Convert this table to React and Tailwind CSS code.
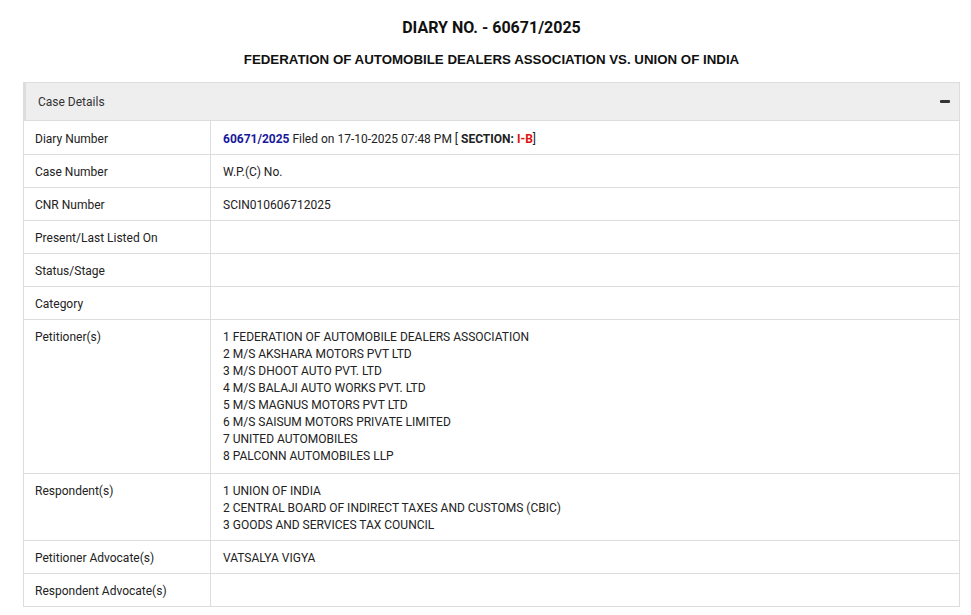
import React from 'react'

const petitioners = [
  '1 FEDERATION OF AUTOMOBILE DEALERS ASSOCIATION',
  '2 M/S AKSHARA MOTORS PVT LTD',
  '3 M/S DHOOT AUTO PVT. LTD',
  '4 M/S BALAJI AUTO WORKS PVT. LTD',
  '5 M/S MAGNUS MOTORS PVT LTD',
  '6 M/S SAISUM MOTORS PRIVATE LIMITED',
  '7 UNITED AUTOMOBILES',
  '8 PALCONN AUTOMOBILES LLP',
]

const respondents = [
  '1 UNION OF INDIA',
  '2 CENTRAL BOARD OF INDIRECT TAXES AND CUSTOMS (CBIC)',
  '3 GOODS AND SERVICES TAX COUNCIL',
]

const Row = ({ label, children, pad = 'pt-[9px] pb-[6px]' }) => (
  <tr>
    <td className={`w-[187px] border border-[#ddd] px-[11px] align-top ${pad}`}>{label}</td>
    <td className={`border border-[#ddd] px-[12px] align-top ${pad}`}>{children}</td>
  </tr>
)

const App = () => {
  return (
    <div className="bg-white text-[#222] font-['Roboto',sans-serif] text-[12px] leading-[17px] min-h-[615px]">
      <div className="ml-[23px] mr-[11px] pt-[18px]">
        <h2 className="text-center text-[16px] leading-[20px] font-bold text-[#111]">
          DIARY NO. - 60671/2025
        </h2>
        <h3 className="mt-[13px] text-center text-[13.3px] leading-[18px] font-bold text-[#111] font-['Liberation_Sans',Arial,sans-serif]">
          FEDERATION OF AUTOMOBILE DEALERS ASSOCIATION VS. UNION OF INDIA
        </h3>

        <div className="mt-[13px]">
          <div className="flex items-center justify-between h-[38px] bg-[#eee] border-t border-r border-[#ddd] border-l-[3px] border-l-[#ddd] pl-[12px] pr-[9px]">
            <span className="text-[12px] text-[#333] pt-[1px]">Case Details</span>
            <span className="block w-[10px] h-[3px] bg-[#333] rounded-[1px]" />
          </div>
          <table className="w-full border-collapse">
            <tbody>
              <Row label="Diary Number" pad="pt-[10px] pb-[6px]">
                <span className="font-bold text-[#1a1a9c]">60671/2025</span> Filed on 17-10-2025 07:48 PM [{' '}
                <span className="font-bold">SECTION:</span>{' '}
                <span className="font-bold text-[#e01010]">I-B</span>]
              </Row>
              <Row label="Case Number">W.P.(C) No.</Row>
              <Row label="CNR Number">SCIN010606712025</Row>
              <Row label="Present/Last Listed On">{'\u00a0'}</Row>
              <Row label="Status/Stage">{'\u00a0'}</Row>
              <Row label="Category">{'\u00a0'}</Row>
              <Row label="Petitioner(s)" pad="pt-[9px] pb-[8px]">
                {petitioners.map(p => (
                  <div key={p}>{p}</div>
                ))}
              </Row>
              <Row label="Respondent(s)">
                {respondents.map(r => (
                  <div key={r}>{r}</div>
                ))}
              </Row>
              <Row label="Petitioner Advocate(s)">VATSALYA VIGYA</Row>
              <Row label="Respondent Advocate(s)">{'\u00a0'}</Row>
            </tbody>
          </table>
        </div>
      </div>
    </div>
  )
}

export default App
